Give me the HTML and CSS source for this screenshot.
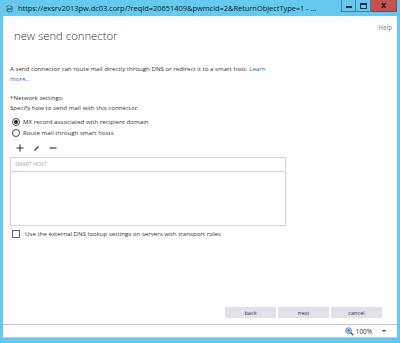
FILE: index.html
```html
<!DOCTYPE html>
<html lang="en">
<head>
    <meta charset="UTF-8">
    <title>new send connector</title>
    <link rel="stylesheet" href="styles.css">
</head>
<body>
    <div class="window">
        <div class="titlebar">
            <svg class="ie-icon" width="11" height="11" viewBox="0 0 11 11">
                <path d="M2 5.5a3.5 3.5 0 1 1 6.8 1.2H3.6a2 2 0 0 0 3.8.6h1.3A3.5 3.5 0 0 1 2 5.5zm1.6-0.6h3.9a2 2 0 0 0-3.9 0z" fill="#1f7fd0"/>
                <path d="M1 9.5C0 8 3 4 6.5 2.2 9 1 10.5 1 10 3" fill="none" stroke="#f3b222" stroke-width="1"/>
            </svg>
            <span class="title">https://exsrv2013pw.dc03.corp/?reqId=20651409&amp;pwmcid=2&amp;ReturnObjectType=1 - ...</span>
            <div class="controls">
                <span class="ctl ctl-min"><i></i></span>
                <span class="ctl ctl-max"><i></i></span>
                <span class="ctl ctl-close">x</span>
            </div>
        </div>
        <div class="client">
            <div class="page">
                <div class="header">
                    <h1>new send connector</h1>
                    <span class="help">Help</span>
                </div>

                <div class="intro">
                    <div>A send connector can route mail directly through DNS or redirect it to a smart host. <a href="#">Learn</a></div>
                    <div><a href="#">more...</a></div>
                </div>

                <div class="field-label">*Network settings:</div>
                <div class="field-hint">Specify how to send mail with this connector.</div>

                <label class="radio checked"><span class="dot"></span>MX record associated with recipient domain</label>
                <label class="radio"><span class="dot"></span>Route mail through smart hosts</label>

                <div class="toolbar">
                    <svg width="8" height="8" viewBox="0 0 8 8"><path d="M4 0.5v7M0.5 4h7" stroke="#333" stroke-width="1.1"/></svg>
                    <svg width="7" height="7" viewBox="0 0 7 7"><path d="M1 6l1.2-0.3L6 2 5 1 1.3 4.8z" fill="#444"/></svg>
                    <svg width="8" height="8" viewBox="0 0 8 8"><path d="M0.5 4h7" stroke="#333" stroke-width="1.1"/></svg>
                </div>

                <div class="host-list">
                    <div class="host-head">SMART HOST</div>
                </div>

                <label class="check"><span class="box"></span>Use the external DNS lookup settings on servers with transport roles</label>

                <div class="buttons">
                    <button>back</button>
                    <button>next</button>
                    <button>cancel</button>
                </div>
            </div>
            <div class="statusbar">
                <svg width="9" height="9" viewBox="0 0 9 9">
                    <circle cx="3.6" cy="3.6" r="2.8" fill="#d6ecfb" stroke="#3b83c5" stroke-width="1"/>
                    <path d="M3.6 2v3.2M2 3.6h3.2" stroke="#2a6cb0" stroke-width="0.9"/>
                    <path d="M5.6 5.6L8.3 8.3" stroke="#5a5a5a" stroke-width="1.4"/>
                </svg>
                <span class="zoom">100%</span>
                <span class="caret"></span>
            </div>
        </div>
    </div>
</body>
</html>
```

FILE: styles.css
```css
html, body {
    margin: 0;
    height: 100%;
}
body {
    font-family: "Open Sans", "Noto Sans", Arial, sans-serif;
    color: #333;
    background: #64c8ef;
}
.window {
    height: 343px;
    padding: 0 3px 5px 3px;
    box-sizing: border-box;
    display: flex;
    flex-direction: column;
}
.titlebar {
    height: 16px;
    display: flex;
    align-items: flex-start;
}
.ie-icon {
    margin: 3px 3px 0 1px;
}
.title {
    font-size: 7.5px;
    line-height: 17px;
    color: #1a1a1a;
    white-space: nowrap;
    letter-spacing: -0.05px;
}
.controls {
    margin-left: auto;
    display: flex;
}
.ctl {
    height: 12px;
    box-sizing: border-box;
    border: 1px solid #3f7fa3;
    border-top: none;
    display: flex;
    align-items: center;
    justify-content: center;
}
.ctl-min, .ctl-max {
    width: 15px;
}
.ctl-min {
    margin-left: 2px;
}
.ctl-min i {
    width: 6px;
    height: 2px;
    background: #1b2b3a;
    margin-top: 2px;
}
.ctl-max {
    border-left: none;
}
.ctl-max i {
    width: 5px;
    height: 3px;
    border: 1px solid #1b2b3a;
    border-top-width: 2px;
}
.ctl-close {
    width: 26px;
    background: #c75050;
    border-color: #a33c3c;
    border-left: none;
    color: #1a1a1a;
    font-size: 8px;
    font-weight: bold;
    font-family: "DejaVu Sans", sans-serif;
}
.client {
    flex: 1;
    background: #fff;
    display: flex;
    flex-direction: column;
}
.page {
    flex: 1;
    display: flex;
    flex-direction: column;
    padding: 0 5px 6px 7px;
    font-size: 6.15px;
    line-height: 9.5px;
}
.header {
    display: flex;
    justify-content: space-between;
    align-items: flex-start;
    height: 48px;
}
.header h1 {
    margin: 13px 0 0 4px;
    font-size: 11.3px;
    font-weight: 300;
    line-height: 14px;
    color: #333;
}
.help {
    margin-top: 7px;
    font-size: 6.2px;
    color: #777;
}
.intro {
    white-space: nowrap;
}
.intro a {
    color: #1a6ec4;
    text-decoration: none;
}
.field-label {
    margin-top: 10px;
}
.field-hint {
    margin-bottom: 4px;
}
.radio {
    display: flex;
    align-items: center;
    height: 11px;
}
.radio .dot {
    width: 6px;
    height: 6px;
    border: 1px solid #444;
    border-radius: 50%;
    margin: 0 3px 0 2px;
    display: flex;
    align-items: center;
    justify-content: center;
}
.radio.checked .dot::after {
    content: "";
    width: 4px;
    height: 4px;
    border-radius: 50%;
    background: #222;
}
.toolbar {
    display: flex;
    align-items: center;
    gap: 9px;
    height: 16px;
    margin: 2px 0 0 6px;
}
.host-list {
    margin-top: 1px;
    width: 276px;
    height: 69px;
    border: 1px solid #d4d4d4;
    box-sizing: border-box;
}
.host-head {
    height: 13px;
    border-bottom: 1px solid #d4d4d4;
    padding-left: 4px;
    font-size: 5.2px;
    line-height: 13px;
    color: #aaa;
}
.check {
    display: flex;
    align-items: center;
    margin-top: 3px;
    height: 9px;
}
.check .box {
    width: 6px;
    height: 6px;
    border: 1px solid #666;
    margin: 0 5px 0 2px;
}
.buttons {
    margin-top: auto;
    display: flex;
    justify-content: flex-end;
    gap: 2px;
    padding-right: 10px;
}
.buttons button {
    width: 51px;
    height: 11px;
    padding: 0;
    border: none;
    background: #e3e1e8;
    font-family: inherit;
    font-size: 5.6px;
    color: #333;
}
.statusbar {
    height: 12px;
    border-top: 1px solid #c3c3c3;
    border-bottom: 1px solid #c9c9c9;
    display: flex;
    align-items: center;
    justify-content: flex-end;
    padding-right: 11px;
    font-size: 6.4px;
}
.zoom {
    margin: 0 0 0 2px;
}
.caret {
    margin-left: 10px;
    border-left: 2px solid transparent;
    border-right: 2px solid transparent;
    border-top: 2px solid #333;
}
```
